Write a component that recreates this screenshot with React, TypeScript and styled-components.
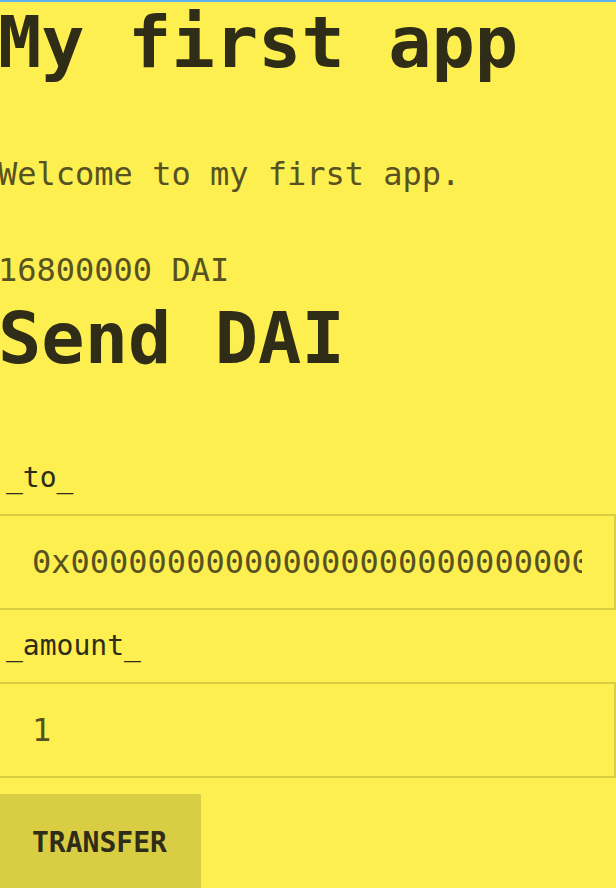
import React, { useState } from "react";
import styled, { createGlobalStyle } from "styled-components";

const Global = createGlobalStyle`
  * { box-sizing: border-box; }
  body {
    margin: 0;
    background: #fdef4f;
    color: #585222;
    font-family: Menlo, "DejaVu Sans Mono", monospace;
    font-size: 32px;
    line-height: 48px;
    overflow: hidden;
  }
`;

const Page = styled.main`
  margin-left: -2px;
  border-top: 2px solid #63b1ec;
`;

const Heading = styled.h1`
  margin: 0;
  color: #2f2c17;
  font-size: 72px;
  font-weight: 700;
  line-height: 80px;
`;

const Subheading = styled(Heading)`
  margin-top: 4px;
`;

const Welcome = styled.p`
  margin: 68px 0 48px;
`;

const Balance = styled.p`
  margin: 0;
`;

const Form = styled.form`
  display: flex;
  flex-direction: column;
  align-items: flex-start;
  padding-top: 76px;
`;

const Label = styled.label`
  margin-bottom: 12px;
  padding: 0 8px;
  color: #2f2c17;
  font-size: 28px;
  line-height: 48px;
`;

const Field = styled.input`
  width: 100%;
  height: 96px;
  margin-bottom: 12px;
  padding: 0 32px;
  border: 2px solid #d9cd43;
  border-radius: 0;
  outline: none;
  background: transparent;
  color: #585222;
  font: inherit;
`;

const Submit = styled.button`
  height: 96px;
  margin-top: 4px;
  padding: 0 32px;
  border: 2px solid #d9cd43;
  border-radius: 0;
  background: #d9cd43;
  color: #2f2c17;
  font-family: inherit;
  font-size: 28px;
  font-weight: 700;
  cursor: pointer;
`;

export default function App() {
  const [to, setTo] = useState("0x0000000000000000000000000000000000000000");
  const [amount, setAmount] = useState("1");
  return (
    <>
      <Global />
      <Page>
        <Heading>My first app</Heading>
        <Welcome>Welcome to my first app.</Welcome>
        <Balance>16800000 DAI</Balance>
        <Subheading as="h2">Send DAI</Subheading>
        <Form onSubmit={(e) => e.preventDefault()}>
          <Label htmlFor="to">_to_</Label>
          <Field id="to" value={to} onChange={(e) => setTo(e.target.value)} />
          <Label htmlFor="amount">_amount_</Label>
          <Field id="amount" value={amount} onChange={(e) => setAmount(e.target.value)} />
          <Submit type="submit">TRANSFER</Submit>
        </Form>
      </Page>
    </>
  );
}
